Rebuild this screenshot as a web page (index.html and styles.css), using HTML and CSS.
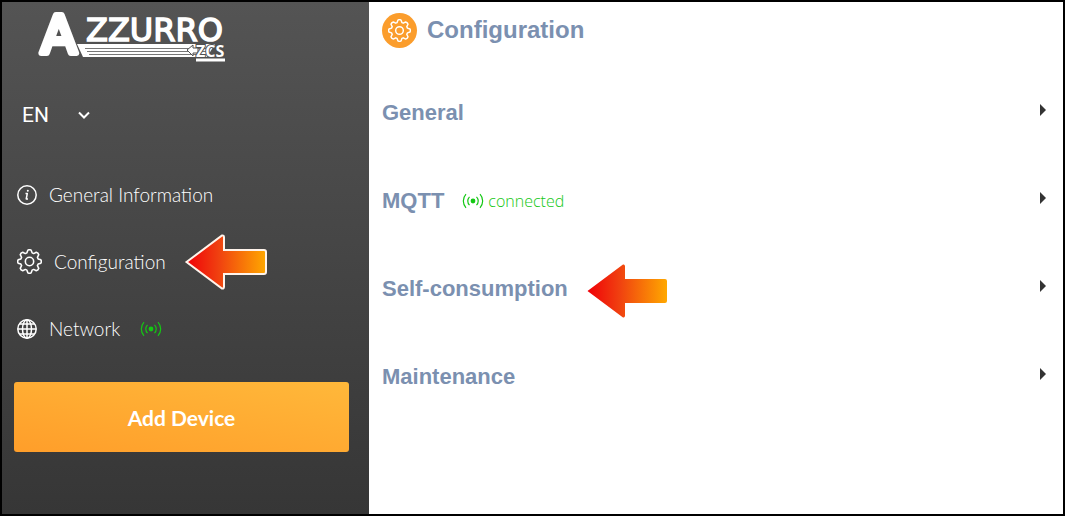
FILE: index.html
```html
<!DOCTYPE html>
<html lang="en">

<head>
    <meta charset="UTF-8">
    <meta name="viewport" content="width=device-width, initial-scale=1.0">
    <title>Azzurro ZCS - Configuration</title>
    <link rel="stylesheet" href="styles.css">
</head>

<body>
    <!-- shared icons -->
    <svg class="sprite" aria-hidden="true">
        <defs>
            <linearGradient id="arrow-fill">
                <stop offset="0" stop-color="#f00008" />
                <stop offset="0.4" stop-color="#f04010" />
                <stop offset="1" stop-color="#ffa800" />
            </linearGradient>
        </defs>
        <symbol id="gear" viewBox="-12 -12 24 24">
            <path d="M-1.6-10.9Q0-11.8 1.6-10.9L2.5-8.3 4-7.6 6.5-8.9Q8.4-8.4 8.9-6.5L7.6-4 8.3-2.5 10.9-1.6Q11.8 0 10.9 1.6L8.3 2.5 7.6 4 8.9 6.5Q8.4 8.4 6.5 8.9L4 7.6 2.5 8.3 1.6 10.9Q0 11.8-1.6 10.9L-2.5 8.3-4 7.6-6.5 8.9Q-8.4 8.4-8.9 6.5L-7.6 4-8.3 2.5-10.9 1.6Q-11.8 0-10.9-1.6L-8.3-2.5-7.6-4-8.9-6.5Q-8.4-8.4-6.5-8.9L-4-7.6-2.5-8.3Z" />
            <circle r="4" />
        </symbol>
        <symbol id="signal" viewBox="0 0 22 16">
            <circle cx="11" cy="8" r="2.4" fill="currentColor" stroke="none" />
            <path d="M7.5 3.8a6 6 0 0 0 0 8.4M14.5 3.8a6 6 0 0 1 0 8.4M4 1.2a10 10 0 0 0 0 13.6M18 1.2a10 10 0 0 1 0 13.6" />
        </symbol>
        <symbol id="pointer" viewBox="0 0 84 56">
            <path d="M2.5 28 38 1.5Q40 1 40 3.500V16H80Q82 16 82 18V38Q82 40 80 40H40V52.500Q40 55 38 54.500Z" />
        </symbol>
    </svg>

    <div class="app">
        <aside class="sidebar">
            <svg class="logo" viewBox="0 0 194 50" role="img" aria-label="Azzurro ZCS">
                <path d="M44 32H182L174 45H50Z" />
                <path class="logo-line" d="M52 36.500H176M54 39.500H174M56 42.500H172" />
                <text class="logo-initial" x="8" y="41">A</text>
                <text class="logo-name" x="53" y="29">ZZURRO</text>
                <path class="logo-plug" d="M154 38L160 33V36H165V41H160V44Z" />
                <text class="logo-brand" x="163" y="45">ZCS</text>
                <path d="M163 46.500H192V49.500H163Z" />
            </svg>

            <div class="language">
                <select class="language-select" aria-label="Language">
                    <option>EN</option>
                    <option>IT</option>
                </select>
                <svg class="language-chevron" viewBox="0 0 12 8"><path d="M1 1.500 6 6.500 11 1.500" /></svg>
            </div>

            <nav class="menu">
                <a class="menu-item" href="#info">
                    <svg class="icon" viewBox="0 0 20 20">
                        <circle cx="10" cy="10" r="9.200" />
                        <path d="M8.500 8.500H10.300L9.200 14H11" />
                        <circle cx="10.800" cy="5.800" r="1" fill="currentColor" stroke="none" />
                    </svg>
                    General Information
                </a>
                <a class="menu-item" href="#configuration">
                    <svg class="icon icon-gear"><use href="#gear" /></svg>
                    Configuration
                    <svg class="pointer pointer-menu"><use href="#pointer" /></svg>
                </a>
                <a class="menu-item" href="#network">
                    <svg class="icon" viewBox="0 0 20 20">
                        <circle cx="10" cy="10" r="9.200" />
                        <ellipse cx="10" cy="10" rx="4.500" ry="9.200" />
                        <path d="M10 .8V19.200M.8 10H19.200M2.500 5H17.500M2.500 15H17.500" />
                    </svg>
                    Network
                    <svg class="signal signal-menu"><use href="#signal" /></svg>
                </a>
            </nav>

            <button class="btn-add" type="button">Add Device</button>
        </aside>

        <main class="content">
            <header class="page-header">
                <span class="page-icon"><svg><use href="#gear" /></svg></span>
                <h1>Configuration</h1>
            </header>

            <div class="sections">
                <button class="section" type="button">
                    <span class="section-title">General</span>
                    <svg class="caret" viewBox="0 0 6 12"><path d="M0 0 6 6 0 12Z" /></svg>
                </button>
                <button class="section" type="button">
                    <span class="section-title">MQTT</span>
                    <span class="status"><svg class="signal"><use href="#signal" /></svg>connected</span>
                    <svg class="caret" viewBox="0 0 6 12"><path d="M0 0 6 6 0 12Z" /></svg>
                </button>
                <button class="section" type="button">
                    <span class="section-title">Self-consumption</span>
                    <svg class="pointer pointer-section"><use href="#pointer" /></svg>
                    <svg class="caret" viewBox="0 0 6 12"><path d="M0 0 6 6 0 12Z" /></svg>
                </button>
                <button class="section" type="button">
                    <span class="section-title">Maintenance</span>
                    <svg class="caret" viewBox="0 0 6 12"><path d="M0 0 6 6 0 12Z" /></svg>
                </button>
            </div>
        </main>
    </div>
</body>

</html>
```
FILE: styles.css
```css
* {
    box-sizing: border-box;
}

body {
    margin: 0;
    font-family: "Liberation Sans", Arial, sans-serif;
}

svg {
    flex-shrink: 0;
}

.sprite {
    position: absolute;
    width: 0;
    height: 0;
}

.app {
    display: flex;
    min-height: 100vh;
    border: 2px solid #000;
    background: #fff;
}

/* sidebar */
.sidebar {
    display: flex;
    flex-direction: column;
    flex: 0 0 367px;
    padding: 10px 20px 12px 12px;
    background: linear-gradient(#545454, #363636);
    color: #fff;
}

.logo {
    width: 194px;
    height: 50px;
    margin-left: 19px;
    fill: #fff;
    overflow: visible;
}

.logo-line {
    stroke: #777;
    stroke-width: 1;
}

.logo-initial {
    font: 52px "DejaVu Sans", sans-serif;
    stroke: #fff;
    stroke-width: 6;
    stroke-linejoin: round;
}

.logo-name {
    font: 32px "DejaVu Sans", sans-serif;
    stroke: #fff;
    stroke-width: 1.5;
}

.logo-brand {
    font: bold 16px "Open Sans", sans-serif;
    stroke: #505050;
    stroke-width: 2;
    paint-order: stroke;
}

.logo-plug {
    stroke: #505050;
}

.language {
    display: flex;
    align-items: center;
    height: 40px;
    margin: 33px 0 26px 8px;
}

.language-select {
    width: 56px;
    padding: 0;
    border: 0;
    background: none;
    color: #fff;
    font: 400 21px Roboto, sans-serif;
    appearance: none;
}

.language-select option {
    color: #333;
}

.language-chevron {
    width: 12px;
    height: 8px;
    fill: none;
    stroke: #fff;
    stroke-width: 2;
}

.menu-item {
    display: flex;
    align-items: center;
    gap: 12px;
    height: 67px;
    padding-left: 3px;
    color: #fff;
    font: 300 19px Lato, sans-serif;
    text-decoration: none;
}

.icon {
    width: 20px;
    height: 20px;
    fill: none;
    stroke: currentColor;
    stroke-width: 1.5;
    stroke-linejoin: round;
}

.icon-gear {
    width: 25px;
    height: 25px;
}

.signal {
    width: 22px;
    height: 16px;
    fill: none;
    color: #14c814;
    stroke: currentColor;
    stroke-width: 1.2;
}

.signal-menu {
    margin-left: 8px;
}

.pointer {
    width: 84px;
    height: 56px;
    fill: url(#arrow-fill);
}

.pointer-menu {
    margin-left: 6px;
    stroke: #fff4ec;
    stroke-width: 2;
}

.pointer-section {
    margin: 4px 0 0 17px;
}

.btn-add {
    height: 70px;
    margin-top: 20px;
    border: 0;
    border-radius: 3px;
    background: linear-gradient(10deg, #ff9e2a, #ffb83a);
    color: #fff;
    font: bold 21px Lato, sans-serif;
    cursor: pointer;
}

/* main area */
.content {
    flex: 1;
    padding: 0 17px 0 13px;
    color: #7b90b0;
}

.page-header {
    display: flex;
    align-items: center;
    gap: 10px;
    height: 56px;
    margin-bottom: 11px;
}

.page-header h1 {
    margin: 0;
    font-size: 24px;
}

.page-icon {
    display: flex;
    align-items: center;
    justify-content: center;
    width: 35px;
    height: 35px;
    border-radius: 50%;
    background: #fb9d2c;
}

.page-icon svg {
    width: 23px;
    height: 23px;
    fill: none;
    stroke: #fff;
    stroke-width: 1.5;
    stroke-linejoin: round;
}

.section {
    display: flex;
    align-items: center;
    width: 100%;
    height: 88px;
    padding: 0;
    border: 0;
    background: none;
    color: inherit;
    font: bold 22px "Liberation Sans", Arial, sans-serif;
    cursor: pointer;
}

.status {
    display: flex;
    align-items: center;
    gap: 4px;
    margin-left: 18px;
    color: #14c814;
    font: 300 16px "Open Sans", sans-serif;
}

.caret {
    width: 6px;
    height: 12px;
    margin: 0 0 6px auto;
    fill: #333;
}
```
